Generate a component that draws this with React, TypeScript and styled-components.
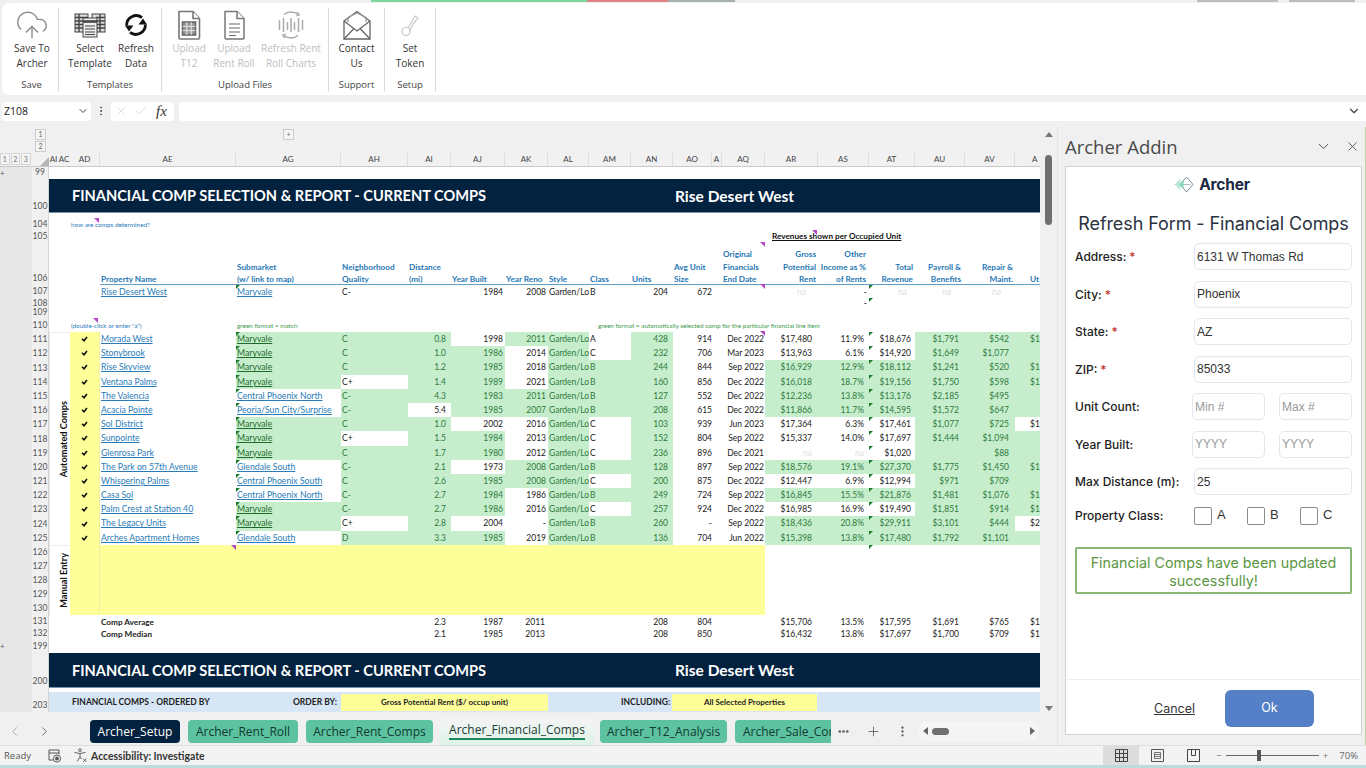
import React from "react";
import styled, { createGlobalStyle } from "styled-components";
import { CloudUpload, ChevronDown, ChevronLeft, ChevronRight, X, Check, Plus, MoreVertical, MoreHorizontal } from "lucide-react";

const Global = createGlobalStyle`
  html, body { margin: 0; padding: 0; width: 1366px; height: 768px; overflow: hidden; background: #f0f0f0; }
  * { box-sizing: border-box; }
  #root { width: 1366px; height: 768px; }
`;

const BODY_COLS = "30px 136px 105px 67px 43px 54px 43px 41px 42px 42px 39px 10px 43px 53px 51px 46px 50px 50px 25px";

const Page = styled.div`
  width: 1366px; height: 768px; display: flex; flex-direction: column; background: #f0f0f0;
  font-family: "Open Sans", "Liberation Sans", sans-serif; overflow: hidden;
`;
const Strip = styled.div`display: flex; height: 3px; flex: none;`;
const StripPart = styled.span<{ $w: number; $c?: string }>`
  width: ${p => p.$w}px; height: 2px; background: ${p => p.$c || "transparent"};
`;
const Ribbon = styled.div`
  margin-left: 2px; height: 92px; flex: none; background: #fff; border-radius: 7px 0 0 7px; display: flex;
  padding: 5px 0 3px;
`;
const Group = styled.div<{ $w: number; $pad?: number }>`
  width: ${p => p.$w}px; padding-left: ${p => p.$pad || 0}px; display: flex; flex-direction: column;
  border-right: 1px solid #dcdcdc; flex: none;
`;
const GroupButtons = styled.div`display: flex; flex: 1;`;
const GroupLabel = styled.div<{ $back?: number }>`
  font-size: 9.5px; line-height: 14px; text-align: center; color: #444; margin-left: ${p => -(p.$back || 0)}px;
`;
const RibbonBtn = styled.div<{ $w: number; $off?: boolean }>`
  width: ${p => p.$w}px; display: flex; flex-direction: column; align-items: center; flex: none;
  color: ${p => (p.$off ? "#bdbdbd" : "#333")}; font-size: 10px; line-height: 14.5px; text-align: center; white-space: nowrap;
`;
const IconSlot = styled.div`height: 33px; display: flex; align-items: center; justify-content: center;`;

const FormulaBar = styled.div`display: flex; align-items: center; height: 20px; margin-top: 6px; flex: none; padding-left: 2px;`;
const NameBox = styled.div`
  width: 89px; height: 19px; background: #fff; border-radius: 3px; display: flex; align-items: center; justify-content: space-between;
  font-size: 10.5px; padding: 0 2px; color: #222;
`;
const Dots = styled.div`width: 20px; display: flex; justify-content: center; color: #444;`;
const FxBox = styled.div`
  width: 63px; height: 19px; background: #fff; border-radius: 3px; display: flex; align-items: center; gap: 6px; padding-left: 3px; color: #c4c4c4;
`;
const Fx = styled.span`font-family: "Liberation Serif", serif; font-style: italic; font-size: 15px; color: #333; margin-left: 2px;`;
const FormulaInput = styled.div`
  flex: 1; height: 19px; margin-left: 5px; background: #fff; border-radius: 3px 0 0 3px; display: flex; align-items: center; justify-content: flex-end;
  padding-right: 5px; color: #444;
`;

const Middle = styled.div`display: flex; margin-top: 6px; flex: none; height: 618px;`;
const LeftPane = styled.div`width: 1057px; display: flex; flex-direction: column; flex: none;`;
const SheetWrap = styled.div`display: flex; height: 589px; flex: none;`;
const Sheet = styled.div`width: 1040px; height: 589px; overflow: hidden; display: flex; flex-direction: column; flex: none; font-family: Lato, "Liberation Sans", sans-serif;`;
const OutlineBar = styled.div`height: 25px; padding-left: 35px; display: flex; gap: 237px; flex: none; padding-top: 2px;`;
const OutlineStack = styled.div`display: flex; flex-direction: column; gap: 1px;`;
const OutlineBtn = styled.div`
  width: 11px; height: 11px; background: #f4f4f4; border: 1px solid #ccc; font-size: 7px; line-height: 9px; text-align: center; color: #666;
`;
const ColHeadRow = styled.div`display: flex; height: 14px; flex: none; margin-top: 1px; border-bottom: 1px solid #c9c9c9;`;
const LevelBtns = styled.div`width: 32px; display: flex; gap: 1px; flex: none;`;
const LevelBtn = styled.div`
  width: 9.5px; height: 12px; background: #f4f4f4; border: 1px solid #d6d6d6; font-size: 7px; line-height: 10px; text-align: center; color: #777;
`;
const Corner = styled.div`width: 17px; flex: none; display: flex; justify-content: flex-end; align-items: flex-end; background: #f1f1f1;`;
const ColStubs = styled.div`width: 21px; display: flex; flex: none; font-size: 8px; color: #444; line-height: 13px; text-align: center; background: #f1f1f1;`;
const ColStub = styled.span<{ $w: number }>`width: ${p => p.$w}px; white-space: nowrap;`;
const BodyGrid = styled.div<{ $h?: number }>`
  display: grid; grid-template-columns: ${BODY_COLS}; width: 970px; flex: none; background: #fff; ${p => (p.$h ? `height: ${p.$h}px;` : "")}
`;
const ColHead = styled.div`
  background: #f1f1f1; border-right: 1px solid #dedede; text-align: center; font-size: 8px; line-height: 13px; color: #444; overflow: hidden;
`;
const ColHeadEnd = styled(ColHead)`text-align: left; padding-left: 17px; border-right: 0;`;

const RowWrap = styled.div<{ $h: number }>`display: flex; height: ${p => p.$h}px; flex: none;`;
const Gutter = styled.div`
  width: 32px; flex: none; background: #e7e7e7; color: #666; font-size: 8px; line-height: 12px;
`;
const RowNum = styled.div<{ $tight?: boolean }>`
  width: 17px; flex: none; background: #f0f0f0; color: #555; font-size: 8.5px; text-align: center; display: flex; align-items: flex-end; justify-content: center;
  border-right: 1px solid #d4d4d4; line-height: 9px; padding-bottom: ${p => (p.$tight ? 0 : 2)}px;
`;
const Spacer = styled.div`width: 21px; flex: none; background: #fff;`;
const Blank = styled.div<{ $span?: number }>`grid-column: span ${p => p.$span || 1}; background: #fff;`;
const BodyWhite = styled.div`flex: 1; background: #fff; min-width: 0;`;
const Band = styled.div`
  flex: 1; background: #03223f; color: #fff; font-weight: 700; font-size: 15.5px; display: flex; align-items: center; border-bottom: 1px solid #7e93a8; white-space: nowrap;
`;
const BandTitle = styled.div`width: 626px; padding-left: 23px; flex: none; font-size: 14.6px;`;
const BlueBar = styled.div`
  flex: 1; background: #d6e6f4; display: flex; align-items: center; font-size: 8.5px; font-weight: 700; color: #222; white-space: nowrap;
`;
const BarLabel = styled.div<{ $w: number; $pad?: number }>`width: ${p => p.$w}px; padding-left: ${p => p.$pad || 0}px; flex: none;`;
const BarPick = styled.div<{ $w: number }>`
  width: ${p => p.$w}px; height: 17px; background: #ffff99; text-align: center; line-height: 17px; flex: none; font-size: 8px;
`;

const Cell = styled.div<{ $a?: string; $pr?: number; $pl?: number; $fill?: boolean; $span?: number; $tone?: string; $b?: boolean; $size?: number; $lh?: number }>`
  position: relative; white-space: nowrap; font-size: ${p => p.$size || 8.5}px; line-height: ${p => p.$lh || 14}px;
  grid-column: span ${p => p.$span || 1}; text-align: ${p => p.$a || "left"}; padding: 0 ${p => p.$pr ?? 1}px 0 ${p => p.$pl ?? 1}px;
  background: ${p => (p.$fill ? "#c6eecd" : "#fff")}; color: ${p => p.$tone || (p.$fill ? "#2f7a3c" : "#222")};
  font-weight: ${p => (p.$b ? 700 : 400)};
`;
const Link = styled.span<{ $green?: boolean }>`
  color: ${p => (p.$green ? "#1f6b2c" : "#2a7cb8")}; text-decoration: underline; font-size: 8.7px;
`;
const Yellow = styled.div`background: #ffff99; display: flex; justify-content: center; align-items: center; border-right: 1px solid #f0f0a0;`;
const YellowBlock = styled.div`
  height: 70px; width: 665px; background: #ffff99; position: relative;
`;
const YellowRow = styled.div`display: flex; background: #fff; width: 970px; height: 70px;`;
const YellowKey = styled.div`width: 30px; height: 70px; background: #ffff99; border-right: 1px solid #f0f0a0; flex: none;`;
const Head = styled.div<{ $a?: string; $span?: number; $pr?: number; $pl?: number }>`
  grid-column: span ${p => p.$span || 1}; align-self: end; text-align: ${p => p.$a || "left"}; padding: 0 ${p => p.$pr || 0}px 0 ${p => p.$pl ?? 1}px;
  color: #1f78b4; font-weight: 700; font-size: 8.2px; line-height: 12.6px; white-space: pre; position: relative; margin-bottom: -1px;
`;
const HeadBody = styled(BodyGrid)`
  height: 42px; align-items: end;
  background: linear-gradient(#5f9fca, #5f9fca) no-repeat 30px 100% / calc(100% - 30px) 1.5px, #fff;
`;
const HeadBlank = styled.div`background: transparent;`;
const Small = styled.div<{ $tone: string }>`
  color: ${p => p.$tone}; font-size: 6.4px; line-height: 13px; white-space: nowrap; padding-left: 1px; position: relative;
`;
const SmallBar = styled.div`flex: 1; background: #fff; display: flex; align-items: flex-end;`;
const SmallSlot = styled.div<{ $w: number }>`width: ${p => p.$w}px; flex: none;`;
const RevTitle = styled.div`
  flex: 1; background: #fff; padding-left: 723px; font-size: 8.2px; font-weight: 700; color: #111; text-decoration: underline; line-height: 11px; white-space: nowrap; position: relative;
`;
const Section = styled.div`display: flex; flex: none;`;
const Heads = styled.div`width: 49px; display: flex; flex-direction: column; flex: none;`;
const Sides = styled.div`width: 21px; display: flex; flex-direction: column; flex: none;`;
const Side = styled.div<{ $h: number }>`
  height: ${p => p.$h}px; display: flex; align-items: center; justify-content: center; background: #fff; border-left: 1px solid #e5e5e5; border-top: 1px solid #eee; padding-left: 7px;
`;
const SideText = styled.div`
  writing-mode: vertical-rl; transform: rotate(180deg); font-size: 9.2px; font-weight: 700; color: #111; white-space: nowrap;
`;
const Rows = styled.div`display: flex; flex-direction: column; flex: none;`;
const Tick = styled.i`
  position: absolute; left: 0; top: 0; width: 0; height: 0; border-top: 4px solid #1a7a2c; border-right: 4px solid transparent;
`;
const TickBelow = styled(Tick)`left: 769px;`;
const Note = styled.i<{ $l: number; $t: number }>`
  position: absolute; left: ${p => p.$l}px; top: ${p => p.$t}px; width: 0; height: 0; border-top: 5px solid #b44bc4; border-left: 5px solid transparent;
`;

const VScroll = styled.div`
  width: 17px; flex: none; display: flex; flex-direction: column; align-items: center; padding-top: 5px; color: #666;
`;
const ArrowUp = styled.i`width: 0; height: 0; border-left: 4px solid transparent; border-right: 4px solid transparent; border-bottom: 5px solid #777;`;
const ArrowDown = styled.i`width: 0; height: 0; border-left: 4px solid transparent; border-right: 4px solid transparent; border-top: 5px solid #777; margin-top: 481px;`;
const Thumb = styled.div`width: 7px; height: 70px; background: #6f6f6f; border-radius: 4px; margin-top: 18px;`;

const TabBar = styled.div`height: 29px; display: flex; align-items: center; flex: none; background: #f0f0f0; padding-top: 1px;`;
const Nav = styled.div`width: 90px; display: flex; flex: none; padding-left: 7px; gap: 15px; color: #555;`;
const Tab = styled.div<{ $bg?: string; $w: number; $tone?: string }>`
  width: ${p => p.$w}px; height: 23px; flex: none; margin-right: 8px; border-radius: 4px; background: ${p => p.$bg || "#5cc2a0"};
  color: ${p => p.$tone || "#103a30"}; font-size: 12px; line-height: 23px; text-align: center; white-space: nowrap; overflow: hidden;
`;
const ActiveTab = styled.div`
  width: 154px; height: 28px; flex: none; margin: 0 6px 0 -1px; background: linear-gradient(#f4f4f4, #dff3ea); border-radius: 5px 5px 0 0; text-align: center;
  font-size: 12px; color: #1c3a33; padding-top: 4px; white-space: nowrap;
`;
const ActiveLabel = styled.span`border-bottom: 2px solid #1b8a5a; display: inline-block; line-height: 16px;`;
const ClipTab = styled(Tab)`width: 96px; border-radius: 4px 0 0 4px; text-align: left; padding-left: 8px; margin-right: 0;`;
const TabTools = styled.div`display: flex; align-items: center; color: #555; margin-left: 6px; gap: 15.5px;`;
const HScroll = styled.div`display: flex; align-items: center; margin-left: 10px; width: 120px; height: 20px; background: #f5f5f5; border-radius: 8px; padding: 0 4px;`;
const ArrowLeft = styled.i`width: 0; height: 0; border-top: 4px solid transparent; border-bottom: 4px solid transparent; border-right: 5px solid #666; flex: none;`;
const ArrowRight = styled.i`width: 0; height: 0; border-top: 4px solid transparent; border-bottom: 4px solid transparent; border-left: 5px solid #666; flex: none; margin-left: auto;`;
const HThumb = styled.div`width: 17px; height: 7px; background: #6f6f6f; border-radius: 4px; margin-left: 4px;`;

const Panel = styled.div`
  width: 309px; flex: none; height: 618px; padding: 0 3px 10px 7px; display: flex; flex-direction: column; border-left: 1px solid #e3e3e3; border-right: 1px solid #b5d6a0;
`;
const PanelHead = styled.div`height: 39px; display: flex; align-items: center; flex: none; color: #444;`;
const PanelTitle = styled.div`font-size: 18.5px; flex: 1; color: #4a4a4a;`;
const CloseIcon = styled(X)`margin: 0 2px 0 13px;`;
const Card = styled.div`
  flex: 1; background: #fff; border: 1px solid #d0d0d0; display: flex; flex-direction: column; font-family: Inter, "Liberation Sans", sans-serif;
`;
const LogoRow = styled.div`height: 35px; display: flex; justify-content: center; align-items: center; gap: 5px; margin-right: 3px;`;
const LogoText = styled.div`font-size: 15.5px; font-weight: 700; color: #1c2942; letter-spacing: -0.2px;`;
const Title = styled.div`font-size: 18px; color: #2b3240; text-align: center; line-height: 24px; margin-top: 10px; letter-spacing: -0.1px; white-space: nowrap;`;
const Fields = styled.div`display: flex; flex-direction: column; gap: 10.5px; padding: 7px 9px 0;`;
const Field = styled.div`display: grid; grid-template-columns: 119px 1fr; align-items: center; height: 27px;`;
const Label = styled.label`font-size: 12px; color: #222; font-weight: 500; white-space: nowrap;`;
const Req = styled.span`color: #c0392b; margin-left: 3px;`;
const Input = styled.input`
  width: 100%; height: 27px; border: 1.5px solid #e3e6ee; border-radius: 5px; padding: 0 2px; font-family: "Liberation Sans", sans-serif; font-size: 12px; color: #333; background: #fff; outline: none;
  &::placeholder { color: #9a9a9a; }
`;
const Pair = styled.div`display: flex; gap: 14px; margin-left: -2px;`;
const PairInput = styled(Input)`width: 73px;`;
const ClassRow = styled.div`display: grid; grid-template-columns: 119px 1fr; align-items: center; height: 22px; padding: 0 9px; margin-top: 9px;`;
const Checks = styled.div`display: flex;`;
const CheckItem = styled.div`width: 53px; display: flex; align-items: flex-start; gap: 5px; font-size: 13px; line-height: 17px; color: #333; font-family: "Liberation Sans", sans-serif;`;
const Box = styled.div`width: 18px; height: 18px; border: 1px solid #8a8a8a; border-radius: 2px; margin-top: 1px; flex: none;`;
const Alert = styled.div`
  margin: 21px 9px 0; height: 47px; border: 2px solid #8ab676; border-radius: 2px; color: #5b9642; font-size: 14.3px; line-height: 18px; text-align: center; padding-top: 5px;
`;
const Footer = styled.div`
  margin-top: auto; height: 55px; border-top: 1.5px solid #eeeeee; display: flex; align-items: center; justify-content: flex-end; gap: 30px; padding: 2px 47px 0 0;
`;
const Cancel = styled.span`font-size: 12.5px; text-decoration: underline; color: #333;`;
const Ok = styled.div`
  width: 89px; height: 37px; border-radius: 6px; background: #5580c8; color: #fff; font-size: 12.5px; text-align: center; line-height: 36px;
`;

const Status = styled.div`
  height: 20px; flex: none; display: flex; align-items: center; background: #f3f3f3; font-size: 9.5px; color: #555; padding-left: 4px; border-top: 1px solid #dedede;
`;
const StatusAcc = styled.div`display: flex; align-items: center; gap: 3px; margin-left: 11px; font-weight: 700; color: #333; font-family: Lato, sans-serif; font-size: 10.4px;`;
const StatusMac = styled.div`margin-left: 17px; display: flex;`;
const StatusRight = styled.div`margin-left: auto; display: flex; align-items: center; height: 100%; padding-right: 8px;`;
const ViewBtn = styled.div<{ $on?: boolean }>`
  width: 36px; height: 100%; display: flex; align-items: center; justify-content: center; background: ${p => (p.$on ? "#dcdcdc" : "transparent")}; color: #444;
`;
const Zoom = styled.div`display: flex; align-items: center; margin-left: 5px; color: #777; gap: 4px; width: 112px;`;
const ZoomTrack = styled.div`flex: 1; height: 1px; background: #666; position: relative;`;
const ZoomThumb = styled.i`position: absolute; left: 31px; top: -5px; width: 4px; height: 11px; background: #555;`;
const ZoomPct = styled.div`margin-left: 11px; font-size: 9.5px; color: #666;`;
const BottomLine = styled.div`height: 3px; background: #bcdcdc; flex: none;`;

/* ---------- drawings ---------- */
const TemplateIcon = () => (
  <svg width="32" height="27" viewBox="0 0 32 27" fill="none" stroke="#444" strokeWidth="1">
    <rect x="1" y="3" width="13" height="18" fill="#ddd" />
    <rect x="18" y="3" width="13" height="18" fill="#ddd" />
    <path d="M1 6.5h13M1 10h9M1 13.5h9M1 17h9M22 6.5h9M22 10h9M22 13.5h9M22 17h9M5 3v18M26 3v18" strokeWidth="1.4" />
    <rect x="9" y="7" width="14" height="19" fill="#eee" />
    <path d="M9 10.5h14" strokeWidth="2.6" />
    <path d="M11 15h10M11 18h10M11 21h10M11 23.5h10" strokeWidth="1.2" />
  </svg>
);
const RefreshIcon = () => (
  <svg width="26" height="26" viewBox="0 0 26 26" fill="none" stroke="#111" strokeWidth="2.8">
    <path d="M3.6 13.5A9.6 9.6 0 0 1 19 5.6" />
    <path d="M22.4 12.5A9.6 9.6 0 0 1 7 20.4" />
    <path d="M16.5 10.5H25L21 4.5z" fill="#111" stroke="none" transform="translate(-1 2)" />
    <path d="M1 15.5H9.5L5 21.5z" fill="#111" stroke="none" transform="translate(1 -2)" />
  </svg>
);
const T12Icon = () => (
  <svg width="24" height="30" viewBox="0 0 24 30" fill="#fff" stroke="#777" strokeWidth="1.6">
    <path d="M2 1.5h14l6.5 7V28a1 1 0 0 1-1 1H3a1 1 0 0 1-1-1z" />
    <path d="M16 1.5v7h6.5" />
    <rect x="5.5" y="12" width="13" height="13" fill="#999" stroke="#666" />
    <path d="M5.5 16.3h13M5.5 20.6h13M9.8 12v13M14.2 12v13" stroke="#eee" strokeWidth="0.9" />
  </svg>
);
const DocIcon = () => (
  <svg width="23" height="30" viewBox="0 0 23 30" fill="#fff" stroke="#777" strokeWidth="1.5">
    <path d="M2 1.5h12l7 7V28a1 1 0 0 1-1 1H3a1 1 0 0 1-1-1z" />
    <path d="M14 1.5v7h7" />
    <path d="M6 14h11M6 18h11M6 22h11M6 25.5h7" stroke="#666" strokeWidth="1.2" />
  </svg>
);
const ChartIcon = () => (
  <svg width="28" height="32" viewBox="0 0 28 32" fill="none" stroke="#aaa" strokeWidth="1.6">
    <path d="M7 5.5a11 11 0 0 1 14 0" />
    <path d="M21 26.5a11 11 0 0 1-14 0" />
    <path d="M20 3l2.5 3-3.6 1M8 29l-2.5-3 3.6-1" strokeWidth="1.2" />
    <path d="M2.5 11v10M6.5 9v14M10.5 13v8M14 9v14M17.5 13v8M21.5 9v14M25.5 11v10" strokeWidth="1.5" />
  </svg>
);
const MailIcon = () => (
  <svg width="30" height="30" viewBox="0 0 30 30" fill="none" stroke="#666" strokeWidth="1.3">
    <path d="M2 11L15 1.5 28 11V29H2z" fill="#fff" />
    <path d="M6 12V7.5L15 3l9 4.5V12" stroke="#999" />
    <path d="M2 11l13 10 13-10M2 29l10-10.5M28 29L18 18.5" />
  </svg>
);
const KeyIcon = () => (
  <svg width="18" height="24" viewBox="0 0 18 24" fill="none" stroke="#c8c8c8" strokeWidth="1.2">
    <circle cx="5" cy="18.5" r="4" />
    <path d="M7 15L14 3l3 2-1 2-1.5.3-.3 1.7-1.4.4-4 8" />
  </svg>
);
const LogoIcon = () => (
  <svg width="20" height="17" viewBox="0 0 20 17" fill="none">
    <path d="M12.5 1L19 8.5 12.5 16 6 8.5z" stroke="#7b8a94" strokeWidth="1" />
    <path d="M0.5 8.5h16" stroke="#9ab" strokeWidth="0.8" />
    <path d="M6.5 2.5L0.8 8.5l5.7 6z" fill="#b6e8d2" />
    <path d="M9.5 4.5L5.5 8.5l4 4z" fill="#7fd8b4" />
  </svg>
);
const Tickmark = () => (
  <svg width="7" height="6" viewBox="0 0 7 6" fill="none" stroke="#111" strokeWidth="1.6"><path d="M1 2.8l2 2L6 1" /></svg>
);
const CornerMark = () => (
  <svg width="9" height="9" viewBox="0 0 9 9"><path d="M9 0v9H0z" fill="#b5b5b5" /></svg>
);
const MacroIcon = () => (
  <svg width="14" height="14" viewBox="0 0 14 14" fill="none" stroke="#555" strokeWidth="1"><path d="M1 1h10v4M1 1v10h4M1 4h10" /><circle cx="9" cy="9.5" r="3.6" /><circle cx="9" cy="9.5" r="1.5" fill="#555" /></svg>
);
const AccessIcon = () => (
  <svg width="15" height="15" viewBox="0 0 15 15" fill="none" stroke="#555" strokeWidth="0.9"><circle cx="7" cy="2.2" r="1.4" /><path d="M1.5 4.5L7 5.5l5.5-1M7 5.5V9M7 9l-3 4.5M7 9l1.5 2M10 10.5l3.5 3.5M13.5 10.5L10 14" /></svg>
);
const GridView = () => (
  <svg width="13" height="13" viewBox="0 0 13 13" fill="none" stroke="#444" strokeWidth="1"><path d="M.5.5h12v12H.5zM.5 4.5h12M.5 8.5h12M4.5.5v12M8.5.5v12" /></svg>
);
const PageView = () => (
  <svg width="13" height="13" viewBox="0 0 13 13" fill="none" stroke="#555" strokeWidth="1"><path d="M.5.5h12v12H.5z" /><path d="M3.5 3.5h6v6h-6zM3.5 5.5h6M3.5 7.5h6" strokeWidth="0.8" /></svg>
);
const BreakView = () => (
  <svg width="13" height="13" viewBox="0 0 13 13" fill="none" stroke="#444" strokeWidth="1"><path d="M.5 12.5V.5h12v12zM4.5.5v6h4v-6" /></svg>
);

/* ---------- data ---------- */
type Comp = { n: string; name: string; sub: string; q: string; d: string; yb: string; yr: string; c: string; u: string; s: string; e: string; g: string; o: string; t: string; p: string; r: string; w: string; white: string };
const comps: Comp[] = [
  { n: "111", name: "Morada West", sub: "Maryvale", q: "C", d: "0.8", yb: "1998", yr: "2011", c: "A", u: "428", s: "914", e: "Dec 2022", g: "$17,480", o: "11.9%", t: "$18,676", p: "$1,791", r: "$542", w: "$1", white: "yb c g o t" },
  { n: "112", name: "Stonybrook", sub: "Maryvale", q: "C", d: "1.0", yb: "1986", yr: "2014", c: "C", u: "232", s: "706", e: "Mar 2023", g: "$13,963", o: "6.1%", t: "$14,920", p: "$1,649", r: "$1,077", w: "", white: "yr c g o t" },
  { n: "113", name: "Rise Skyview", sub: "Maryvale", q: "C", d: "1.2", yb: "1985", yr: "2018", c: "B", u: "244", s: "844", e: "Sep 2022", g: "$16,929", o: "12.9%", t: "$18,112", p: "$1,241", r: "$520", w: "$1", white: "yr" },
  { n: "114", name: "Ventana Palms", sub: "Maryvale", q: "C+", d: "1.4", yb: "1989", yr: "2021", c: "B", u: "160", s: "856", e: "Dec 2022", g: "$16,018", o: "18.7%", t: "$19,156", p: "$1,750", r: "$598", w: "$1", white: "q yr" },
  { n: "115", name: "The Valencia", sub: "Central Phoenix North", q: "C-", d: "4.3", yb: "1983", yr: "2011", c: "B", u: "127", s: "552", e: "Dec 2022", g: "$12,236", o: "13.8%", t: "$13,176", p: "$2,185", r: "$495", w: "", white: "sub" },
  { n: "116", name: "Acacia Pointe", sub: "Peoria/Sun City/Surprise", q: "C-", d: "5.4", yb: "1985", yr: "2007", c: "B", u: "208", s: "615", e: "Dec 2022", g: "$11,866", o: "11.7%", t: "$14,595", p: "$1,572", r: "$647", w: "", white: "sub d" },
  { n: "117", name: "Sol District", sub: "Maryvale", q: "C", d: "1.0", yb: "2002", yr: "2016", c: "C", u: "103", s: "939", e: "Jun 2023", g: "$17,364", o: "6.3%", t: "$17,461", p: "$1,077", r: "$725", w: "$1", white: "yb yr c g o t w" },
  { n: "118", name: "Sunpointe", sub: "Maryvale", q: "C+", d: "1.5", yb: "1984", yr: "2013", c: "C", u: "152", s: "804", e: "Sep 2022", g: "$15,337", o: "14.0%", t: "$17,697", p: "$1,444", r: "$1,094", w: "", white: "q yr c g o t" },
  { n: "119", name: "Glenrosa Park", sub: "Maryvale", q: "C", d: "1.7", yb: "1980", yr: "2012", c: "C", u: "236", s: "896", e: "Dec 2021", g: "na", o: "na", t: "$1,020", p: "", r: "$88", w: "", white: "yr c g o t" },
  { n: "120", name: "The Park on 57th Avenue", sub: "Glendale South", q: "C-", d: "2.1", yb: "1973", yr: "2008", c: "B", u: "128", s: "897", e: "Sep 2022", g: "$18,576", o: "19.1%", t: "$27,370", p: "$1,775", r: "$1,450", w: "$1", white: "sub yb" },
  { n: "121", name: "Whispering Palms", sub: "Central Phoenix South", q: "C", d: "2.6", yb: "1985", yr: "2008", c: "C", u: "200", s: "875", e: "Dec 2022", g: "$12,447", o: "6.9%", t: "$12,994", p: "$971", r: "$709", w: "", white: "sub c g o t" },
  { n: "122", name: "Casa Sol", sub: "Central Phoenix North", q: "C-", d: "2.7", yb: "1984", yr: "1986", c: "B", u: "249", s: "724", e: "Sep 2022", g: "$16,845", o: "15.5%", t: "$21,876", p: "$1,481", r: "$1,076", w: "$1", white: "sub yr" },
  { n: "123", name: "Palm Crest at Station 40", sub: "Maryvale", q: "C-", d: "2.7", yb: "1986", yr: "2016", c: "C", u: "257", s: "924", e: "Dec 2022", g: "$16,985", o: "16.9%", t: "$19,490", p: "$1,851", r: "$914", w: "$1", white: "yr c g o t" },
  { n: "124", name: "The Legacy Units", sub: "Maryvale", q: "C+", d: "2.8", yb: "2004", yr: "-", c: "B", u: "260", s: "-", e: "Sep 2022", g: "$18,436", o: "20.8%", t: "$29,911", p: "$3,101", r: "$444", w: "$2", white: "q yb yr w" },
  { n: "125", name: "Arches Apartment Homes", sub: "Glendale South", q: "D", d: "3.3", yb: "1985", yr: "2019", c: "B", u: "136", s: "704", e: "Jun 2022", g: "$15,398", o: "13.8%", t: "$17,480", p: "$1,792", r: "$1,101", w: "", white: "sub yr" },
];
const colHeads = ["AD", "AE", "AG", "AH", "AI", "AJ", "AK", "AL", "AM", "AN", "AO", "A", "AQ", "AR", "AS", "AT", "AU", "AV"];

const SheetRow: React.FC<{ h: number; num: string; plus?: boolean; tight?: boolean; children: React.ReactNode }> = ({ h, num, plus, tight, children }) => (
  <RowWrap $h={h}>
    <Gutter>{plus ? "+" : ""}</Gutter>
    <RowNum $tight={tight}>{num}</RowNum>
    {children}
  </RowWrap>
);

const StatsRow: React.FC<{ num: string; h: number; lh: number; label: string; v: string[] }> = ({ num, h, lh, label, v }) => (
  <SheetRow h={h} num={num}>
    <Spacer />
    <BodyGrid>
      <Blank />
      <Cell $b $size={8.2} $lh={lh}>{label}</Cell>
      <Blank $span={2} />
      <Cell $lh={lh} $a="right" $pr={5}>{v[0]}</Cell>
      <Cell $lh={lh} $a="right" $pr={2}>{v[1]}</Cell>
      <Cell $lh={lh} $a="right" $pr={3}>{v[2]}</Cell>
      <Blank $span={2} />
      <Cell $lh={lh} $a="right" $pr={5}>{v[3]}</Cell>
      <Cell $lh={lh} $a="right" $pr={0}>{v[4]}</Cell>
      <Blank $span={2} />
      <Cell $lh={lh} $a="right" $pr={6}>{v[5]}</Cell>
      <Cell $lh={lh} $a="right" $pr={5}>{v[6]}</Cell>
      <Cell $lh={lh} $a="right" $pr={4}>{v[7]}</Cell>
      <Cell $lh={lh} $a="right" $pr={6}>{v[8]}</Cell>
      <Cell $lh={lh} $a="right" $pr={6}>{v[9]}</Cell>
      <Cell $lh={lh} $pl={15} $pr={0}>{v[10]}</Cell>
    </BodyGrid>
  </SheetRow>
);

const CompRow: React.FC<{ c: Comp; first: boolean }> = ({ c, first }) => {
  const wh = new Set(c.white.split(" "));
  const g = (k: string) => !wh.has(k);
  const isGreenSub = g("sub");
  return (
    <BodyGrid $h={14.2}>
      <Yellow><Tickmark /></Yellow>
      <Cell $pr={0}><Link>{c.name}</Link></Cell>
      <Cell $fill={isGreenSub}><Tick /><Link $green={isGreenSub}>{c.sub}</Link></Cell>
      <Cell $fill={g("q")}>{c.q}</Cell>
      <Cell $fill={g("d")} $a="right" $pr={5}>{c.d}</Cell>
      <Cell $fill={g("yb")} $a="right" $pr={2}>{c.yb}</Cell>
      <Cell $fill={g("yr")} $a="right" $pr={2}>{c.yr}</Cell>
      <Cell $fill $pr={0}>Garden/Lo</Cell>
      <Cell $fill={g("c")}>{c.c}</Cell>
      <Cell $fill $a="right" $pr={5}>{c.u}</Cell>
      <Cell $a="right" $pr={0}>{c.s}</Cell>
      <Blank />
      <Cell $a="right" $pr={1}>{first ? <Note $l={38} $t={-1} /> : null}{c.e}</Cell>
      <Cell $fill={g("g")} $a="right" $pr={6} $tone={c.g === "na" ? "#e2e2e2" : undefined}>{c.g}</Cell>
      <Cell $fill={g("o")} $a="right" $pr={5} $tone={c.o === "na" ? "#e2e2e2" : undefined}>{c.o}</Cell>
      <Cell $fill={g("t")} $a="right" $pr={4}><Tick />{c.t}</Cell>
      <Cell $fill={g("p")} $a="right" $pr={6}>{c.p}</Cell>
      <Cell $fill={g("r")} $a="right" $pr={6}>{c.r}</Cell>
      <Cell $fill={g("w")} $pl={15} $pr={0}>{c.w}</Cell>
    </BodyGrid>
  );
};

export default function App() {
  return (
    <Page>
      <Global />
      <Strip>
        <StripPart $w={371} />
        <StripPart $w={216} $c="#7ed69a" />
        <StripPart $w={81} $c="#e08080" />
        <StripPart $w={67} $c="#a8b0ac" />
        <StripPart $w={462} />
        <StripPart $w={81} $c="#bdbdbd" />
        <StripPart $w={11} />
        <StripPart $w={66} $c="#bdbdbd" />
      </Strip>
      <Ribbon>
        <Group $w={57} $pad={3}>
          <GroupButtons>
            <RibbonBtn $w={54}>
              <IconSlot><CloudUpload size={34} color="#8c8c8c" strokeWidth={1} /></IconSlot>
              Save To<br />Archer
            </RibbonBtn>
          </GroupButtons>
          <GroupLabel>Save</GroupLabel>
        </Group>
        <Group $w={103} $pad={3}>
          <GroupButtons>
            <RibbonBtn $w={56}>
              <IconSlot><TemplateIcon /></IconSlot>
              Select<br />Template
            </RibbonBtn>
            <RibbonBtn $w={36}>
              <IconSlot><RefreshIcon /></IconSlot>
              Refresh<br />Data
            </RibbonBtn>
          </GroupButtons>
          <GroupLabel $back={3}>Templates</GroupLabel>
        </Group>
        <Group $w={167} $pad={7}>
          <GroupButtons>
            <RibbonBtn $w={40} $off>
              <IconSlot><T12Icon /></IconSlot>
              Upload<br />T12
            </RibbonBtn>
            <RibbonBtn $w={50} $off>
              <IconSlot><DocIcon /></IconSlot>
              Upload<br />Rent Roll
            </RibbonBtn>
            <RibbonBtn $w={64} $off>
              <IconSlot><ChartIcon /></IconSlot>
              Refresh Rent<br />Roll Charts
            </RibbonBtn>
          </GroupButtons>
          <GroupLabel $back={7}>Upload Files</GroupLabel>
        </Group>
        <Group $w={56}>
          <GroupButtons>
            <RibbonBtn $w={55}>
              <IconSlot><MailIcon /></IconSlot>
              Contact<br />Us
            </RibbonBtn>
          </GroupButtons>
          <GroupLabel>Support</GroupLabel>
        </Group>
        <Group $w={51}>
          <GroupButtons>
            <RibbonBtn $w={50}>
              <IconSlot><KeyIcon /></IconSlot>
              Set<br />Token
            </RibbonBtn>
          </GroupButtons>
          <GroupLabel>Setup</GroupLabel>
        </Group>
      </Ribbon>

      <FormulaBar>
        <NameBox>Z108<ChevronDown size={12} color="#444" /></NameBox>
        <Dots><MoreVertical size={12} /></Dots>
        <FxBox><X size={14} strokeWidth={1} /><Check size={14} strokeWidth={1} /><Fx>fx</Fx></FxBox>
        <FormulaInput><ChevronDown size={14} /></FormulaInput>
      </FormulaBar>

      <Middle>
        <LeftPane>
          <SheetWrap>
            <Sheet>
              <OutlineBar>
                <OutlineStack><OutlineBtn>1</OutlineBtn><OutlineBtn>2</OutlineBtn></OutlineStack>
                <OutlineStack><OutlineBtn>+</OutlineBtn></OutlineStack>
              </OutlineBar>
              <ColHeadRow>
                <LevelBtns><LevelBtn>1</LevelBtn><LevelBtn>2</LevelBtn><LevelBtn>3</LevelBtn></LevelBtns>
                <Corner><CornerMark /></Corner>
                <ColStubs><ColStub $w={9}>AI</ColStub><ColStub $w={12}>AC</ColStub></ColStubs>
                <BodyGrid>
                  {colHeads.map((c, i) => <ColHead key={i}>{c}</ColHead>)}
                  <ColHeadEnd>A</ColHeadEnd>
                </BodyGrid>
              </ColHeadRow>

              <SheetRow h={12} num="99" plus><BodyWhite /></SheetRow>
              <SheetRow h={34} num="100">
                <Band><BandTitle>FINANCIAL COMP SELECTION &amp; REPORT - CURRENT COMPS</BandTitle>Rise Desert West</Band>
              </SheetRow>
              <SheetRow h={6} num=""><BodyWhite /></SheetRow>
              <SheetRow h={12} num="104">
                <SmallBar><Spacer /><Small $tone="#2a7cb8">how are comps determined?<Note $l={24} $t={0} /></Small></SmallBar>
              </SheetRow>
              <SheetRow h={12} num="105">
                <RevTitle>Revenues shown per Occupied Unit<Note $l={763} $t={-1} /></RevTitle>
              </SheetRow>
              <SheetRow h={42} num="106">
                <Spacer />
                <HeadBody>
                  <HeadBlank />
                  <Head>Property Name</Head>
                  <Head>{"Submarket\n(w/ link to map)"}</Head>
                  <Head>{"Neighborhood\nQuality"}</Head>
                  <Head>{"Distance\n(mi)"}</Head>
                  <Head $a="left">Year Built</Head>
                  <Head>Year Reno</Head>
                  <Head>Style</Head>
                  <Head>Class</Head>
                  <Head>Units</Head>
                  <Head $span={2}>{"Avg Unit\nSize"}</Head>
                  <Head>{"Original\nFinancials\nEnd Date"}<Note $l={38} $t={-6} /></Head>
                  <Head $a="right" $pr={2}>{"Gross\nPotential\nRent"}</Head>
                  <Head $a="right" $pr={3}>{"Other\nIncome as %\nof Rents"}</Head>
                  <Head $a="right" $pr={2}>{"Total\nRevenue"}</Head>
                  <Head $a="right" $pr={4}>{"Payroll &\nBenefits"}</Head>
                  <Head $a="right" $pr={2}>{"Repair &\nMaint."}</Head>
                  <Head $pl={15}>Ut</Head>
                </HeadBody>
              </SheetRow>
              <SheetRow h={13} num="107">
                <Spacer />
                <BodyGrid>
                  <Blank />
                  <Cell><Link>Rise Desert West</Link></Cell>
                  <Cell><Tick /><Link>Maryvale</Link></Cell>
                  <Cell>C-</Cell>
                  <Blank />
                  <Cell $a="right" $pr={2}>1984</Cell>
                  <Cell $a="right" $pr={2}>2008</Cell>
                  <Cell $pr={0}>Garden/Lo</Cell>
                  <Cell>B</Cell>
                  <Cell $a="right" $pr={5}>204</Cell>
                  <Cell $a="right" $pr={0}>672</Cell>
                  <Blank />
                  <Cell><Note $l={38} $t={-1} /></Cell>
                  <Cell $a="right" $pr={12} $tone="#dcdcdc">na</Cell>
                  <Cell $a="right" $pr={2}>-</Cell>
                  <Cell $a="right" $pr={8} $tone="#dcdcdc"><Tick />na</Cell>
                  <Cell $a="right" $pr={14} $tone="#dcdcdc">na</Cell>
                  <Cell $a="right" $pr={14} $tone="#dcdcdc">na</Cell>
                  <Blank />
                </BodyGrid>
              </SheetRow>
              <SheetRow h={10} num="108" tight>
                <Spacer />
                <BodyGrid>
                  <Blank $span={14} />
                  <Cell $a="right" $pr={2} $lh={10}>-</Cell>
                  <Cell $lh={10}><Tick /></Cell>
                  <Blank $span={3} />
                </BodyGrid>
              </SheetRow>
              <SheetRow h={9} num="109" tight><BodyWhite /></SheetRow>
              <SheetRow h={15} num="110">
                <SmallBar>
                  <Spacer />
                  <SmallSlot $w={166}><Small $tone="#2a7cb8">(double-click or enter "a")<Note $l={23} $t={-1} /></Small></SmallSlot>
                  <SmallSlot $w={361}><Small $tone="#3a9a4a">green format = match</Small></SmallSlot>
                  <Small $tone="#3a9a4a">green format = automatically selected comp for the particular financial line item</Small>
                </SmallBar>
              </SheetRow>

              <Section>
                <Heads>
                  {comps.map(c => (
                    <RowWrap $h={14.2} key={c.n}><Gutter /><RowNum>{c.n}</RowNum></RowWrap>
                  ))}
                  {["126", "127", "128", "129", "130"].map(n => (
                    <RowWrap $h={14} key={n}><Gutter /><RowNum>{n}</RowNum></RowWrap>
                  ))}
                </Heads>
                <Sides>
                  <Side $h={213}><SideText>Automated Comps</SideText></Side>
                  <Side $h={70}><SideText>Manual Entry</SideText></Side>
                </Sides>
                <Rows>
                  {comps.map((c, i) => <CompRow c={c} first={i === 0} key={c.n} />)}
                  <YellowRow>
                    <YellowKey />
                    <YellowBlock><Note $l={131} $t={0} /><TickBelow /></YellowBlock>
                  </YellowRow>
                </Rows>
              </Section>

              <StatsRow num="131" h={13} lh={14} label="Comp Average" v={["2.3", "1987", "2011", "208", "804", "$15,706", "13.5%", "$17,595", "$1,691", "$765", "$1"]} />
              <StatsRow num="132" h={12} lh={12} label="Comp Median" v={["2.1", "1985", "2013", "208", "850", "$16,432", "13.8%", "$17,697", "$1,700", "$709", "$1"]} />
              <SheetRow h={13} num="199" plus><BodyWhite /></SheetRow>
              <SheetRow h={35} num="200">
                <Band><BandTitle>FINANCIAL COMP SELECTION &amp; REPORT - CURRENT COMPS</BandTitle>Rise Desert West</Band>
              </SheetRow>
              <SheetRow h={4} num=""><BodyWhite /></SheetRow>
              <SheetRow h={20} num="203">
                <BlueBar>
                  <BarLabel $w={244} $pad={23}>FINANCIAL COMPS - ORDERED BY</BarLabel>
                  <BarLabel $w={48}>ORDER BY:</BarLabel>
                  <BarPick $w={207}>Gross Potential Rent ($/ occup unit)</BarPick>
                  <BarLabel $w={124} $pad={73}>INCLUDING:</BarLabel>
                  <BarPick $w={145}>All Selected Properties</BarPick>
                </BlueBar>
              </SheetRow>
            </Sheet>
            <VScroll>
              <ArrowUp />
              <Thumb />
              <ArrowDown />
            </VScroll>
          </SheetWrap>
          <TabBar>
            <Nav><ChevronLeft size={15} strokeWidth={1.3} color="#999" /><ChevronRight size={15} strokeWidth={1.3} /></Nav>
            <Tab $w={90} $bg="#03223f" $tone="#fff">Archer_Setup</Tab>
            <Tab $w={110}>Archer_Rent_Roll</Tab>
            <Tab $w={127}>Archer_Rent_Comps</Tab>
            <ActiveTab><ActiveLabel>Archer_Financial_Comps</ActiveLabel></ActiveTab>
            <Tab $w={127}>Archer_T12_Analysis</Tab>
            <ClipTab $w={96}>Archer_Sale_Cor</ClipTab>
            <TabTools>
              <MoreHorizontal size={13} strokeWidth={3} />
              <Plus size={15} strokeWidth={1.3} />
              <MoreVertical size={13} strokeWidth={2.2} />
            </TabTools>
            <HScroll><ArrowLeft /><HThumb /><ArrowRight /></HScroll>
          </TabBar>
        </LeftPane>
        <Panel>
          <PanelHead>
            <PanelTitle>Archer Addin</PanelTitle>
            <ChevronDown size={17} strokeWidth={1.3} />
            <CloseIcon size={15} strokeWidth={1.3} />
          </PanelHead>
          <Card>
            <LogoRow><LogoIcon /><LogoText>Archer</LogoText></LogoRow>
            <Title>Refresh Form - Financial Comps</Title>
            <Fields>
              <Field><Label>Address:<Req>*</Req></Label><Input readOnly value="6131 W Thomas Rd" /></Field>
              <Field><Label>City:<Req>*</Req></Label><Input readOnly value="Phoenix" /></Field>
              <Field><Label>State:<Req>*</Req></Label><Input readOnly value="AZ" /></Field>
              <Field><Label>ZIP:<Req>*</Req></Label><Input readOnly value="85033" /></Field>
              <Field><Label>Unit Count:</Label><Pair><PairInput readOnly placeholder="Min #" /><PairInput readOnly placeholder="Max #" /></Pair></Field>
              <Field><Label>Year Built:</Label><Pair><PairInput readOnly placeholder="YYYY" /><PairInput readOnly placeholder="YYYY" /></Pair></Field>
              <Field><Label>Max Distance (m):</Label><Input readOnly value="25" /></Field>
            </Fields>
            <ClassRow>
              <Label>Property Class:</Label>
              <Checks>
                <CheckItem><Box />A</CheckItem>
                <CheckItem><Box />B</CheckItem>
                <CheckItem><Box />C</CheckItem>
              </Checks>
            </ClassRow>
            <Alert>Financial Comps have been updated successfully!</Alert>
            <Footer><Cancel>Cancel</Cancel><Ok>Ok</Ok></Footer>
          </Card>
        </Panel>
      </Middle>

      <Status>
        Ready
        <StatusMac><MacroIcon /></StatusMac>
        <StatusAcc><AccessIcon />Accessibility: Investigate</StatusAcc>
        <StatusRight>
          <ViewBtn $on><GridView /></ViewBtn>
          <ViewBtn><PageView /></ViewBtn>
          <ViewBtn><BreakView /></ViewBtn>
          <Zoom>−<ZoomTrack><ZoomThumb /></ZoomTrack>+</Zoom>
          <ZoomPct>70%</ZoomPct>
        </StatusRight>
      </Status>
      <BottomLine />
    </Page>
  );
}
